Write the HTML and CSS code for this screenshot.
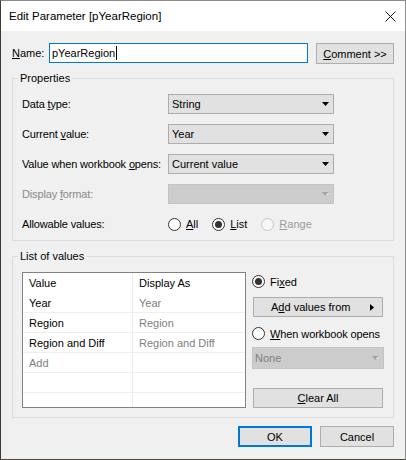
FILE: index.html
```html
<!DOCTYPE html>
<html>
<head>
<meta charset="utf-8">
<link rel="stylesheet" href="styles.css">
</head>
<body>
<div class="window">
  <div class="titlebar">
    <span class="title">Edit Parameter [pYearRegion]</span>
    <svg class="close" width="11" height="11" viewBox="0 0 11 11"><path d="M0.5 0.5L10.5 10.5M10.5 0.5L0.5 10.5" stroke="#111" stroke-width="1" fill="none"/></svg>
  </div>
  <div class="content">
    <div class="name-row">
      <span class="name-label"><u>N</u>ame:</span>
      <div class="name-input">pYearRegion<span class="caret"></span></div>
      <div class="btn comment"><u>C</u>omment &gt;&gt;</div>
    </div>

    <fieldset class="group props">
      <legend>Properties</legend>
      <div class="prow">
        <span class="plabel">Data <u>t</u>ype:</span>
        <div class="select"><span>String</span><svg class="arrow" width="7" height="4" viewBox="0 0 7 4"><path d="M0 0H7L3.5 4Z" fill="#000"/></svg></div>
      </div>
      <div class="prow">
        <span class="plabel">Current <u>v</u>alue:</span>
        <div class="select"><span>Year</span><svg class="arrow" width="7" height="4" viewBox="0 0 7 4"><path d="M0 0H7L3.5 4Z" fill="#000"/></svg></div>
      </div>
      <div class="prow">
        <span class="plabel">Value when workbook <u>o</u>pens:</span>
        <div class="select"><span>Current value</span><svg class="arrow" width="7" height="4" viewBox="0 0 7 4"><path d="M0 0H7L3.5 4Z" fill="#000"/></svg></div>
      </div>
      <div class="prow">
        <span class="plabel disabled">Display <u>f</u>ormat:</span>
        <div class="select off"><span></span><svg class="arrow" width="7" height="4" viewBox="0 0 7 4"><path d="M0 0H7L3.5 4Z" fill="#a3a3a3"/><path d="M4.5 3L6.5 1" stroke="#fff" stroke-width="1"/></svg></div>
      </div>
      <div class="prow">
        <span class="plabel">Allowable values:</span>
        <div class="radios">
          <span class="radio"><span class="dot"></span><span><u>A</u>ll</span></span>
          <span class="radio"><span class="dot on"></span><span><u>L</u>ist</span></span>
          <span class="radio disabled"><span class="dot off"></span><span><u>R</u>ange</span></span>
        </div>
      </div>
    </fieldset>

    <fieldset class="group list">
      <legend>List of values</legend>
      <div class="list-body">
        <div class="table">
          <div class="trow head"><span class="cell">Value</span><span class="cell">Display As</span></div>
          <div class="trow"><span class="cell">Year</span><span class="cell dim">Year</span></div>
          <div class="trow"><span class="cell">Region</span><span class="cell dim">Region</span></div>
          <div class="trow"><span class="cell">Region and Diff</span><span class="cell dim">Region and Diff</span></div>
          <div class="trow"><span class="cell dim">Add</span><span class="cell"></span></div>
          <div class="trow"><span class="cell"></span><span class="cell"></span></div>
          <div class="trow last"><span class="cell"></span><span class="cell"></span></div>
        </div>
        <div class="side">
          <span class="radio fixed"><span class="dot on"></span><span>Fi<u>x</u>ed</span></span>
          <div class="btn addvals"><span>A<u>d</u>d values from</span><svg width="4" height="7" viewBox="0 0 4 7"><path d="M0 0L4 3.5L0 7Z" fill="#000"/></svg></div>
          <span class="radio when"><span class="dot"></span><span><u>W</u>hen workbook opens</span></span>
          <div class="select off none"><span>None</span><svg class="arrow" width="7" height="4" viewBox="0 0 7 4"><path d="M0 0H7L3.5 4Z" fill="#a3a3a3"/><path d="M4.5 3L6.5 1" stroke="#fff" stroke-width="1"/></svg></div>
          <div class="btn clearall"><u>C</u>lear All</div>
        </div>
      </div>
    </fieldset>

    <div class="footer">
      <div class="btn ok">OK</div>
      <div class="btn cancel">Cancel</div>
    </div>
  </div>
</div>
</body>
</html>
```

FILE: styles.css
```css
html, body {
  margin: 0;
  padding: 0;
  background: #f0f0f0;
}
body {
  font-family: "Liberation Sans", Arial, sans-serif;
  font-size: 11px;
  color: #000;
}
u {
  text-decoration-thickness: 1px;
  text-underline-offset: 1px;
}
.window {
  width: 406px;
  height: 460px;
  box-sizing: border-box;
  border: 1px solid #8c8c8c;
  border-left-color: #403a35;
  border-bottom-color: #4a443e;
  background: #f0f0f0;
  display: flex;
  flex-direction: column;
  overflow: hidden;
}
.titlebar {
  height: 30px;
  flex: none;
  background: #fff;
  display: flex;
  align-items: center;
  justify-content: space-between;
  padding: 0 9px 0 8px;
}
.title {
  font-size: 11.5px;
  color: #000;
}
.close {
  display: block;
}
.content {
  padding: 12px 11px 0;
  display: flex;
  flex-direction: column;
}
.name-row {
  display: flex;
  align-items: flex-start;
  height: 21px;
}
.name-label {
  width: 37px;
  line-height: 20px;
}
.name-input {
  width: 259px;
  height: 20px;
  box-sizing: border-box;
  border: 1px solid #0078d7;
  background: #fff;
  padding-left: 2px;
  display: flex;
  align-items: center;
}
.caret {
  width: 1px;
  height: 14px;
  background: #000;
  margin-left: 1px;
}
.btn {
  box-sizing: border-box;
  border: 1px solid #adadad;
  background: #e1e1e1;
  display: flex;
  align-items: center;
  justify-content: center;
  color: #000;
}
.comment {
  width: 78px;
  height: 21px;
  margin-left: 8px;
}
.group {
  margin: 0;
  border: 1px solid #dcdcdc;
  min-width: 0;
}
.group legend {
  padding: 0 2px;
  margin-left: -4px;
  line-height: 16px;
}
.props {
  margin-top: 6px;
  padding: 8px 9px 6px;
}
.prow {
  display: flex;
  align-items: center;
  height: 20px;
}
.prow + .prow {
  margin-top: 10px;
}
.plabel {
  width: 146px;
  flex: none;
  letter-spacing: -0.15px;
  white-space: nowrap;
}
.disabled {
  color: #8a8a8a;
}
.select {
  width: 166px;
  height: 20px;
  box-sizing: border-box;
  border: 1px solid #adadad;
  background: #e1e1e1;
  display: flex;
  align-items: center;
  justify-content: space-between;
  padding: 0 4px 0 3px;
}
.select.off {
  background: #cccccc;
  border-color: #c4c4c4;
}
.arrow {
  display: block;
}
.radios {
  display: flex;
  align-items: center;
  gap: 14px;
}
.radio {
  display: flex;
  align-items: center;
  gap: 5px;
}
.dot {
  width: 13px;
  height: 13px;
  box-sizing: border-box;
  border: 1px solid #333;
  border-radius: 50%;
  background: #fff;
  position: relative;
  flex: none;
}
.dot.on::after {
  content: "";
  position: absolute;
  left: 2px;
  top: 2px;
  width: 7px;
  height: 7px;
  border-radius: 50%;
  background: #333;
}
.dot.off {
  border-color: #c6c6c6;
  background: #f7f7f7;
}
.radio.disabled {
  color: #9a9a9a;
}
.list {
  margin-top: 7px;
  padding: 8px 9px 9px;
}
.list-body {
  display: flex;
  gap: 6px;
}
.table {
  width: 224px;
  height: 136px;
  box-sizing: border-box;
  border: 1px solid #828282;
  background: #fff;
  display: flex;
  flex-direction: column;
}
.trow {
  display: grid;
  grid-template-columns: 110px 1fr;
  height: 20px;
  box-sizing: border-box;
  border-bottom: 1px solid #efefef;
  flex: none;
}
.trow.head {
  border-bottom: none;
}
.trow.last {
  border-bottom: none;
  flex: 1;
}
.cell {
  padding-left: 6px;
  display: flex;
  align-items: center;
  white-space: nowrap;
}
.cell:first-child {
  border-right: 1px solid #ececec;
}
.dim {
  color: #808080;
}
.side {
  width: 132px;
  display: flex;
  flex-direction: column;
}
.fixed {
  height: 19px;
}
.addvals {
  margin: 6px 0 0 1px;
  width: 130px;
  height: 20px;
  justify-content: space-between;
  padding: 0 8px 0 17px;
}
.addvals svg {
  display: block;
}
.when {
  margin-top: 7px;
  height: 19px;
  letter-spacing: -0.1px;
}
.none {
  margin-top: 4px;
  width: 132px;
  height: 22px;
  padding: 0 4px 0 2px;
  color: #808080;
}
.clearall {
  margin: 19px 0 0 1px;
  width: 130px;
  height: 20px;
}
.footer {
  margin-top: 8px;
  display: flex;
  justify-content: flex-end;
  gap: 8px;
}
.footer .btn {
  width: 74px;
  height: 21px;
}
.footer .ok {
  border: 2px solid #0078d7;
}
```
